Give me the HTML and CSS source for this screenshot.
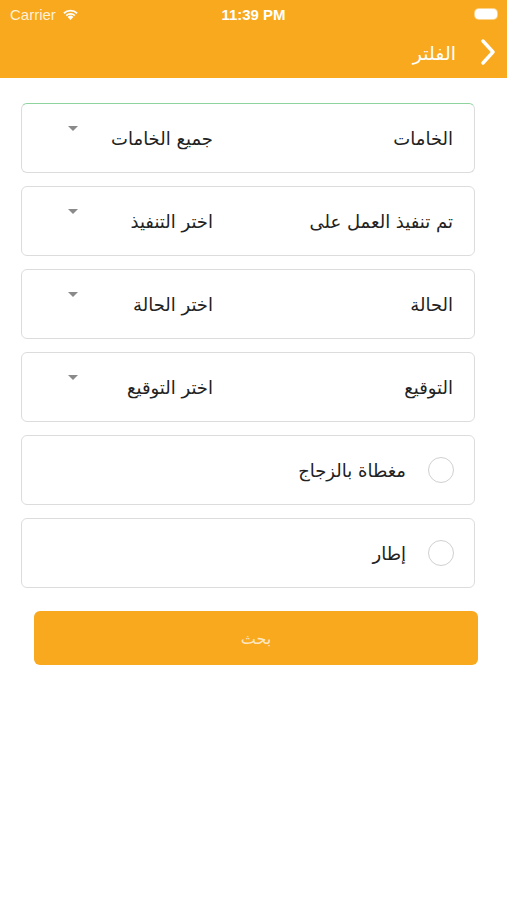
FILE: index.html
```html
<!DOCTYPE html>
<html lang="ar">
<head>
    <meta charset="utf-8">
    <title>الفلتر</title>
    <link rel="stylesheet" href="styles.css">
</head>
<body>
    <div class="topBar">
        <div class="statusBar">
            <div class="carrier">Carrier
                <svg class="wifi" width="17" height="12" viewBox="0 0 17 12"><path d="M8.5 12 L5.6 8.9 A4.2 4.2 0 0 1 11.4 8.9 Z" fill="#fff"/><path d="M3.6 6.9 A7 7 0 0 1 13.4 6.9 L12.1 8.2 A5.2 5.2 0 0 0 4.9 8.2 Z" fill="#fff"/><path d="M1.3 4.6 A10.3 10.3 0 0 1 15.7 4.6 L14.4 5.9 A8.5 8.5 0 0 0 2.6 5.9 Z" fill="#fff"/></svg>
            </div>
            <div class="clock">11:39 PM</div>
            <div class="battery"></div>
        </div>
        <div class="navBar" dir="rtl">
            <svg class="backArrow" width="16" height="26" viewBox="0 0 16 26"><path d="M3 2 L13 13 L3 24" fill="none" stroke="#fff" stroke-width="3.4" stroke-linecap="round" stroke-linejoin="round"/></svg>
            <span class="navTitle">الفلتر</span>
        </div>
    </div>

    <div class="filterForm" dir="rtl">
        <div class="field focused">
            <span class="fieldLabel">الخامات</span>
            <span class="fieldValue">جميع الخامات</span>
            <span class="dropArrow"></span>
        </div>
        <div class="field">
            <span class="fieldLabel">تم تنفيذ العمل على</span>
            <span class="fieldValue">اختر التنفيذ</span>
            <span class="dropArrow"></span>
        </div>
        <div class="field">
            <span class="fieldLabel">الحالة</span>
            <span class="fieldValue">اختر الحالة</span>
            <span class="dropArrow"></span>
        </div>
        <div class="field">
            <span class="fieldLabel">التوقيع</span>
            <span class="fieldValue">اختر التوقيع</span>
            <span class="dropArrow"></span>
        </div>
        <div class="field checkField">
            <span class="radio"></span>
            <span class="checkLabel">مغطاة بالزجاج</span>
        </div>
        <div class="field checkField">
            <span class="radio"></span>
            <span class="checkLabel">إطار</span>
        </div>

        <div class="searchBtn">بحث</div>
    </div>
</body>
</html>
```

FILE: styles.css
```css
html,body{
    margin: 0;
    padding: 0;
    background-color: #fff;
    font-family: "DejaVu Sans", "Noto Sans", sans-serif;
}
.topBar{
    background-color: #f9a91d;
    height: 78px;
    color: #fff;
}
.statusBar{
    height: 28px;
    display: flex;
    align-items: center;
    justify-content: space-between;
    padding: 0 10px 0 10px;
    font-family: "Liberation Sans", sans-serif;
    font-size: 15px;
    position: relative;
}
.carrier{
    display: flex;
    align-items: center;
    gap: 6px;
    color: #fdf1d8;
}
.clock{
    font-weight: bold;
    position: absolute;
    left: 0;
    right: 0;
    text-align: center;
    font-size: 15px;
}
.battery{
    width: 22px;
    height: 10px;
    border-radius: 4px;
    background: #fff;
    box-shadow: 0 0 0 1px #fbd38a;
}
.navBar{
    height: 50px;
    display: flex;
    align-items: center;
    padding-right: 11px;
    gap: 24px;
}
.backArrow{
    margin-top: -2px;
}
.navTitle{
    font-size: 19px;
    color: #fff;
}
.filterForm{
    padding: 25px 32px 0 21px;
    display: flex;
    flex-direction: column;
    gap: 13px;
}
.field{
    height: 70px;
    box-sizing: border-box;
    border: 1px solid #dcdcdc;
    border-radius: 6px;
    display: flex;
    align-items: center;
    padding: 0 21px 0 0;
    font-size: 18px;
    color: #222;
    position: relative;
}
.field.focused{
    border-top-color: #8fd39e;
}
.fieldLabel{
    width: 240px;
}
.fieldValue{
    flex: 1;
}
.dropArrow{
    position: absolute;
    left: 46px;
    top: 22px;
    width: 0;
    height: 0;
    border-left: 5px solid transparent;
    border-right: 5px solid transparent;
    border-top: 5px solid #8a8a8a;
}
.checkField{
    padding-right: 20px;
    gap: 22px;
}
.radio{
    width: 26px;
    height: 26px;
    border: 1px solid #d0d0d0;
    border-radius: 50%;
    box-sizing: border-box;
}
.searchBtn{
    margin: 10px -3px 0 13px;
    height: 54px;
    border-radius: 6px;
    background-color: #f9a91d;
    color: #fde8c4;
    font-size: 16px;
    display: flex;
    align-items: center;
    justify-content: center;
}
```
